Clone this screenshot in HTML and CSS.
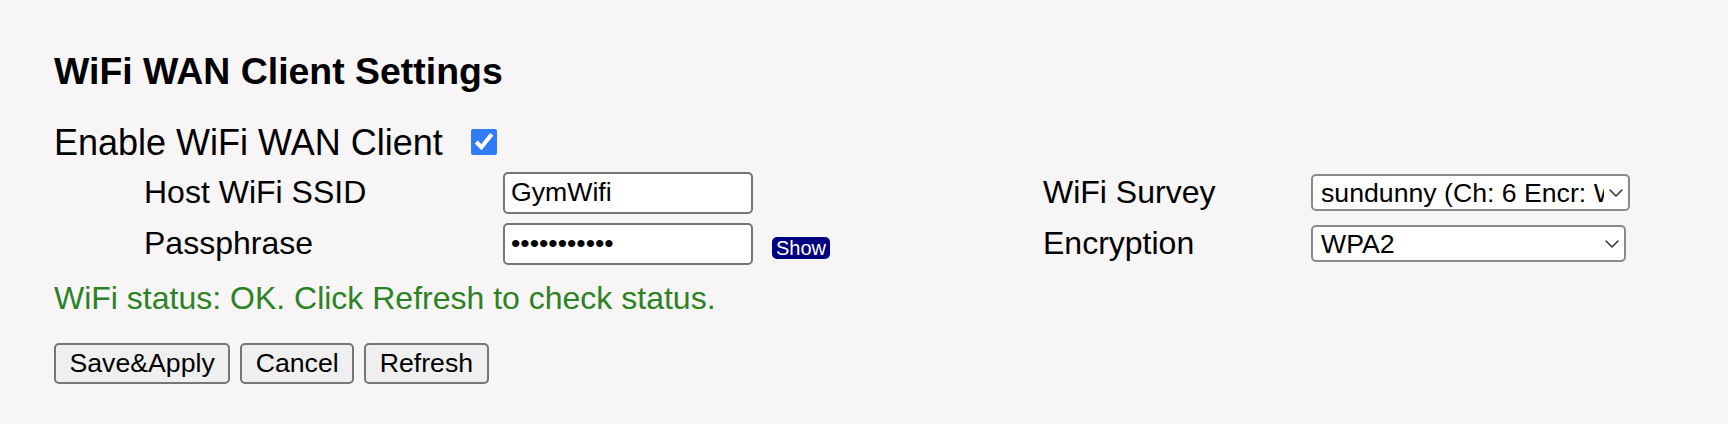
FILE: index.html
```html
<!DOCTYPE html>
<html lang="en">
<head>
<meta charset="utf-8">
<title>WiFi WAN Client Settings</title>
<link rel="stylesheet" href="styles.css">
</head>
<body>
<div class="page">
  <h3 class="title">WiFi WAN Client Settings</h3>
  <div class="enable-row">
    <label class="enable-label" for="enable">Enable WiFi WAN Client</label>
    <input class="enable-check" type="checkbox" id="enable" checked>
  </div>
  <div class="grid">
    <div class="label">Host WiFi SSID</div>
    <div class="field"><input class="text-input" type="text" value="GymWifi"></div>
    <div class="label">WiFi Survey</div>
    <div class="field">
      <span class="select-wrap survey">
        <select class="select">
          <option>sundunny (Ch: 6 Encr: WPA2)</option>
        </select>
        <svg class="chev" width="14" height="8" viewBox="0 0 14 8"><path d="M1 1 L7 7 L13 1" fill="none" stroke="#333" stroke-width="1.5" stroke-linecap="round" stroke-linejoin="round"/></svg>
      </span>
    </div>
    <div class="label">Passphrase</div>
    <div class="field">
      <input class="text-input" type="password" value="secretpass1">
      <button class="show-btn" type="button">Show</button>
    </div>
    <div class="label">Encryption</div>
    <div class="field">
      <span class="select-wrap enc">
        <select class="select">
          <option>WPA2</option>
        </select>
        <svg class="chev" width="14" height="8" viewBox="0 0 14 8"><path d="M1 1 L7 7 L13 1" fill="none" stroke="#333" stroke-width="1.5" stroke-linecap="round" stroke-linejoin="round"/></svg>
      </span>
    </div>
  </div>
  <div class="status">WiFi status: OK. Click Refresh to check status.</div>
  <div class="actions">
    <button class="btn" type="button">Save&amp;Apply</button>
    <button class="btn" type="button">Cancel</button>
    <button class="btn" type="button">Refresh</button>
  </div>
</div>
</body>
</html>
```

FILE: styles.css
```css
html, body {
  margin: 0;
  padding: 0;
  background: #f7f5f6;
}

body {
  font-family: "Liberation Sans", Arial, sans-serif;
  color: #000;
}

.page {
  padding: 50px 0 0 54px;
}

.title {
  margin: 0;
  font-size: 37.44px;
  line-height: 43px;
  font-weight: bold;
}

.enable-row {
  display: flex;
  align-items: center;
  margin-top: 29px;
  height: 41px;
}

.enable-label {
  font-size: 36px;
  line-height: 41px;
}

.enable-check {
  width: 26px;
  height: 26px;
  margin: -2px 0 0 28px;
  accent-color: #2f7cf6;
}

.grid {
  display: grid;
  grid-template-columns: 359px 540px 268px auto;
  grid-auto-rows: 51px;
  align-items: center;
  margin: 4px 0 0 90px;
}

.label {
  font-size: 32px;
}

.field {
  display: flex;
  align-items: center;
}

.text-input {
  box-sizing: border-box;
  width: 250px;
  height: 42px;
  border: 2px solid #767676;
  border-radius: 5px;
  background: #fff;
  padding: 0 6px;
  font-family: "Liberation Sans", Arial, sans-serif;
  font-size: 26.67px;
  color: #000;
  outline: none;
}

.show-btn {
  margin: 8px 0 0 19px;
  height: 22px;
  padding: 0 4px;
  border: 0;
  border-radius: 5px;
  background: #000080;
  color: #fff;
  font-family: "Liberation Sans", Arial, sans-serif;
  font-size: 20px;
  line-height: 22px;
}

.select-wrap {
  position: relative;
  display: inline-block;
}

.select {
  box-sizing: border-box;
  height: 37px;
  border: 2px solid #8a8a8a;
  border-radius: 5px;
  background: #fff;
  padding: 0 24px 0 8px;
  font-family: "Liberation Sans", Arial, sans-serif;
  font-size: 26.67px;
  color: #000;
  appearance: none;
  -webkit-appearance: none;
  outline: none;
}

.survey .select {
  width: 319px;
}

.enc .select {
  width: 315px;
}

.chev {
  position: absolute;
  right: 7px;
  top: 15px;
  pointer-events: none;
}

.status {
  margin-top: 11px;
  font-size: 32px;
  line-height: 37px;
  color: #2d8224;
}

.actions {
  display: flex;
  gap: 10px;
  margin-top: 26px;
}

.btn {
  box-sizing: border-box;
  height: 41px;
  padding: 0 13.5px;
  border: 2px solid #767676;
  border-radius: 5px;
  background: #efefef;
  font-family: "Liberation Sans", Arial, sans-serif;
  font-size: 26.67px;
  color: #000;
}
```
